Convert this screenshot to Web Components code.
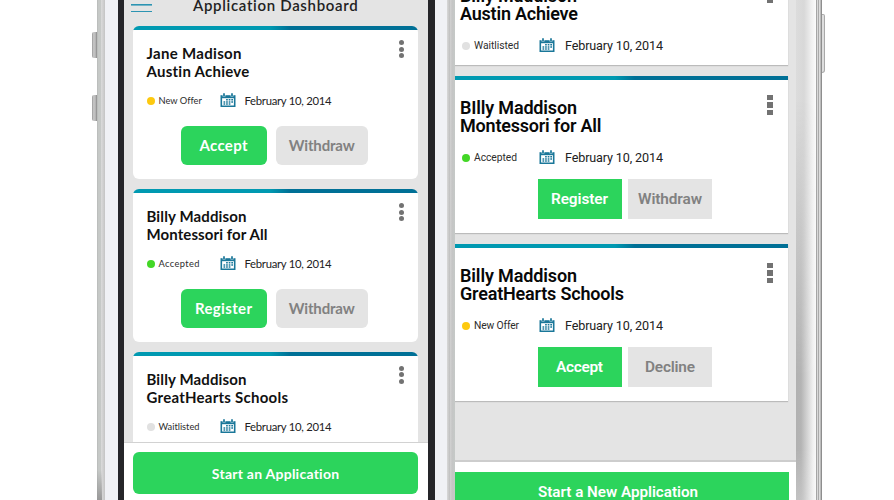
<!DOCTYPE html>
<html lang="en">
<head>
<meta charset="utf-8">
<title>Application Dashboard</title>
<style>
html,body{margin:0;background:#fff}
body{width:894px;height:500px;overflow:hidden;font-family:Lato,"Open Sans",sans-serif}
</style>
</head>
<body>
<device-stage>
  <phone-left slot="left">
    <app-card name="Jane Madison" nw="95" school="Austin Achieve" sw="103" state="New Offer" stw="43" dot="#fdc90f" primary="Accept" pw="48"></app-card>
    <app-card name="Billy Maddison" nw="100" school="Montessori for All" sw="121" state="Accepted" stw="41" dot="#43d726" primary="Register" pw="57"></app-card>
    <app-card name="Billy Maddison" nw="100" school="GreatHearts Schools" sw="141.5" state="Waitlisted" stw="41" dot="#e1e1e1"></app-card>
  </phone-left>
  <phone-right slot="right">
    <app-card class="android" name="Billy Maddison" nw="117" school="Austin Achieve" sw="118" state="Waitlisted" stw="45" dot="#e1e1e1"></app-card>
    <app-card class="android" name="BIlly Maddison" nw="117" school="Montessori for All" sw="141.5" state="Accepted" stw="43" dot="#43d726" primary="Register" pw="57" secondary="Withdraw" s2w="64"></app-card>
    <app-card class="android" name="Billy Maddison" nw="117" school="GreatHearts Schools" sw="164" state="New Offer" stw="45" dot="#fdc90f" primary="Accept" pw="47" secondary="Decline" s2w="50"></app-card>
  </phone-right>
</device-stage>

<script>
class Base extends HTMLElement{
  constructor(){super();this.attachShadow({mode:'open'});}
  render(html){this.shadowRoot.innerHTML=html;}
}

/* Text tracked to fill a given width. */
customElements.define('fit-text',class extends Base{
  connectedCallback(){
    this.render('<style>:host{display:block;white-space:nowrap}span{display:inline-block;line-height:inherit}</style><span></span>');
    const s=this.shadowRoot.querySelector('span'),t=this.getAttribute('text');
    s.textContent=t;
    const w=parseFloat(this.getAttribute('w')),nat=s.getBoundingClientRect().width;
    if(w&&nat){
      const ls=(w-nat)/(t.length-1);
      s.style.letterSpacing=ls+'px';
      s.style.marginRight=-ls+'px';
    }
  }
});

customElements.define('calendar-icon',class extends Base{
  connectedCallback(){
    this.render(`<style>:host{display:block;flex:none;width:16px;height:15px}svg{display:block;width:100%;height:100%}</style>
    <svg viewBox="0 0 16 15"><path fill="#1a7799" d="M.5 2.2h15V14H.5z"/>
    <path stroke="#fff" stroke-width="3" d="M4 0v3.4M12 0v3.4" opacity=".75"/>
    <path stroke="#1a7799" stroke-width="1.7" d="M4 .3v2.8M12 .3v2.8"/>
    <path fill="#fff" d="M2.1 5.2h11.8v7.3H2.1z"/>
    <path fill="#1a7799" d="M6.1 6.1h1.7v1.5H6.1zM8.7 6.1h1.7v1.5H8.7zM11.3 6.1H13v1.5h-1.7zM3.5 8.2h1.7v1.5H3.5zM6.1 8.2h1.7v1.5H6.1zM8.7 8.2h1.7v1.5H8.7zM11.3 8.2H13v1.5h-1.7zM3.5 10.3h1.7v1.4H3.5zM6.1 10.3h1.7v1.4H6.1zM8.7 10.3h1.7v1.4H8.7z"/></svg>`);
  }
});

customElements.define('app-button',class extends Base{
  connectedCallback(){
    this.render(`<style>:host{display:flex;align-items:center;justify-content:center;box-sizing:border-box;background:#2cd45c;color:#fff}
    :host([muted]){background:#e4e4e4;color:#818181}</style>
    <fit-text text="${this.getAttribute('label')}" w="${this.getAttribute('tw')}"></fit-text>`);
  }
});

customElements.define('app-card',class extends Base{
  connectedCallback(){
    const a=n=>this.getAttribute(n);
    const and=this.classList.contains('android');
    this.render(`<style>
    :host{display:block;flex:none;position:relative;box-sizing:border-box;width:285px;height:153.4px;padding:17.8px 0 0 13.5px;background:linear-gradient(90deg,#0099b1 0 48%,#007096 55%) 0 0/100% 4px no-repeat,#fff;border-radius:6px;color:#111}
    .t{font-weight:700;font-size:15px;line-height:18px;height:18px}
    .row{display:flex;align-items:center;height:16px;margin-top:13px}
    .dot{width:8px;height:8px;border-radius:50%;background:${a('dot')};flex:none}
    .st{width:58px;margin-left:4px;font-size:9.3px;line-height:16px;color:#2d2d2d;padding-top:1px}
    .date{margin-left:9px;font-size:11.3px;line-height:16px;color:#222}
    calendar-icon{margin-left:3px}
    .btns{display:flex;gap:9.5px;margin:17px 0 0 34px}
    app-button{height:39px;border-radius:6px;font-weight:700;font-size:15px;width:86px}
    app-button[muted]{width:91.5px}
    .menu{position:absolute;left:266px;top:14px;display:grid;gap:1.7px}
    .menu i{width:5px;height:5px;border-radius:50%;background:#727272}
    :host(.android){font-family:Roboto,sans-serif;width:333px;height:157px;border-radius:0;padding:23px 0 0 5px;box-shadow:0 1px 1px #bbb;background:linear-gradient(90deg,#0099b1 0 48%,#007096 54%) 0 0/100% 4px no-repeat,#fff;color:#080808}
    :host(.android:first-child){height:101px}
    :host(.android) .t{font-size:18px;font-weight:600}
    :host(.android) .row{margin-top:14.5px;margin-left:2px}
    :host(.android) .st{font-size:10.3px;width:62px;padding-top:0}
    :host(.android) .date{font-size:12.6px;margin-left:10px}
    :host(.android) .btns{gap:6.5px;margin:13.5px 0 0 77.5px}
    :host(.android) app-button{width:84px;height:39.5px;border-radius:0;font-size:15.4px;font-weight:600}
    :host(.android) .menu{left:312px;top:18.5px;gap:2px}
    :host(.android) .menu i{width:6px;height:5.5px;border-radius:0}
    </style>
    <fit-text class="t" text="${a('name')}" w="${a('nw')}"></fit-text>
    <fit-text class="t" text="${a('school')}" w="${a('sw')}"></fit-text>
    <div class="row"><span class="dot"></span><fit-text class="st" text="${a('state')}" w="${a('stw')}"></fit-text><calendar-icon></calendar-icon><fit-text class="date" text="February 10, 2014" w="${and?98:87}"></fit-text></div>
    ${a('primary')?`<div class="btns"><app-button label="${a('primary')}" tw="${a('pw')}"></app-button><app-button muted label="${a('secondary')||'Withdraw'}" tw="${a('s2w')||66}"></app-button></div>`:''}
    <div class="menu"><i></i><i></i><i></i></div>`);
  }
});

customElements.define('phone-left',class extends Base{
  connectedCallback(){
    this.render(`<style>
    :host{display:grid;grid-template-columns:5px 8px 13px 6px 304px 6.5px 12.5px;height:500px;position:relative}
    .keys{padding-top:32px;display:grid;grid-auto-rows:26px;gap:37px;align-content:start}
    .keys i{background:linear-gradient(90deg,#999,#c9c9c9 35%,#b5b5b5 70%,#888);border-radius:2px 0 0 2px}
    .metal{background:linear-gradient(90deg,#b7b9b8 0,#c6c9c7 20%,#c6c9c7 48%,#dadada 53%,#cecece 80%,#c4c4c4)}
    .metal{position:relative}
    .metal::after{content:"";position:absolute;left:0;bottom:0;width:4.5px;height:30px;background:linear-gradient(#9990,#999)}
    .white{background:#f0f1f5}.black{background:#252529}
    .screen{background:#e4e4e4;height:500px;overflow:hidden;display:flex;flex-direction:column;position:relative}
    header{height:26px;flex:none;display:flex;box-sizing:border-box;padding-left:7px}
    .burger{width:21px;height:12px;border-bottom:1.6px solid #2c94b2;background:linear-gradient(#2c94b2,#2c94b2) 0 3.5px/100% 1.6px no-repeat;box-sizing:border-box}
    .title{margin:-5px 0 0 41px;font-size:15px;font-weight:600;line-height:20px;height:20px;color:#222}
    .cards{display:flex;flex-direction:column;gap:9.5px;padding-left:9px;height:416px;overflow:hidden;flex:none}
    footer{flex:none;height:58px;box-sizing:border-box;border-top:1.6px solid #d2d2d2;background:#fff;padding:9px 0 0 9px}
    footer app-button{width:285px;height:42px;border-radius:6px;font-weight:700;font-size:14px}
    </style>
    <div class="keys"><i></i><i></i></div><div class="metal"></div><div class="white"></div><div class="black"></div>
    <div class="screen"><header><div class="burger"></div><fit-text class="title" text="Application Dashboard" w="165"></fit-text></header>
    <div class="cards"><slot></slot></div>
    <footer><app-button label="Start an Application" tw="127.5"></app-button></footer></div>
    <div class="black"></div><div class="white"></div>`);
  }
});

customElements.define('phone-right',class extends Base{
  connectedCallback(){
    this.render(`<style>
    :host{display:grid;grid-template-columns:8px 341px 20px 6px 3px;height:500px;font-family:Roboto,sans-serif}
    .edge{background:linear-gradient(90deg,#e2e2e2 0,#c2c2c2 14%,#d8d8d8 25%,#b5b5b5 35%,#d6d6d6 46%,#c5c5c5 60%,#c5c9c7 100%)}
    .screen{background:#e4e4e4;height:500px;overflow:hidden;display:flex;flex-direction:column}
    .cards{height:460px;overflow:hidden;flex:none;display:flex;flex-direction:column;gap:11px}
    .cards ::slotted(:first-child){margin-top:-36px}
    footer{flex:none;height:40px;box-sizing:border-box;border-top:2px solid #cdcdcd;background:#fff;padding-top:10px}
    footer app-button{width:334px;height:40px;font-size:15.2px;font-weight:600;padding-right:8px}
    .bezel{position:relative;background:linear-gradient(90deg,#dcdcdc,#d8d8d8 40%,#eee 75%,#fbfbfb)}
    .bezel::after{content:"";position:absolute;inset:0;background:linear-gradient(90deg,#b1b1b1,#b4b4b4 25%,#d2d2d2 55%,#f0f0f0 85%,#f8f8f8);-webkit-mask:linear-gradient(transparent 20%,#000 75%,#000 90%,#0009)}
    .rim{background:linear-gradient(90deg,#a5a5a5 0 1px,#d9d9d9 1px 2px,#aaa 2px 3px,#ddd 3px 4px,#bcbcbc 4px 5px,#8e8e8e 5px 6px)}
    .key{height:59px;margin-top:14px;box-sizing:border-box;background:#dedede;border:1px solid #a9a9a9;border-left:0;border-radius:0 2px 3px 0}
    </style>
    <div class="edge"></div><div class="screen"><div class="cards"><slot></slot></div>
    <footer><app-button label="Start a New Application" tw="160"></app-button></footer></div>
    <div class="bezel"></div><div class="rim"></div><div class="key"></div>`);
  }
});

customElements.define('device-stage',class extends Base{
  connectedCallback(){
    this.render(`<style>:host{display:grid;grid-template-columns:355px 378px;padding-left:92px;width:894px;height:500px;box-sizing:border-box;overflow:hidden}</style>
    <slot name="left"></slot><slot name="right"></slot>`);
  }
});
</script>
</body>
</html>
